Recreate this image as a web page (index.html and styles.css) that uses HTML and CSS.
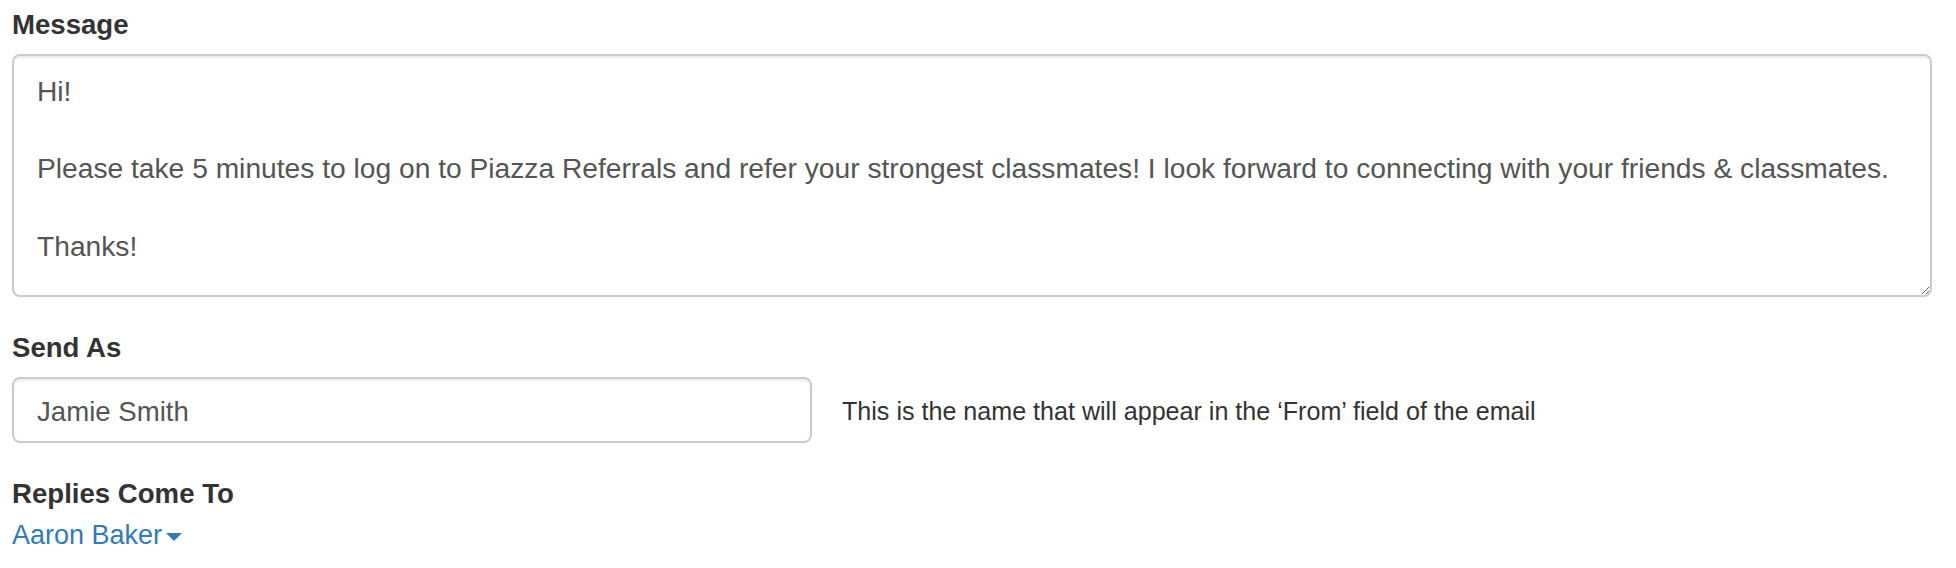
FILE: index.html
```html
<!DOCTYPE html>
<html lang="en">
<head>
<meta charset="utf-8">
<title>Referral message</title>
<link rel="stylesheet" href="styles.css">
</head>
<body>
<form class="form">
  <div class="form-group">
    <label class="label" for="message">Message</label>
    <textarea id="message" class="textarea">Hi!

Please take 5 minutes to log on to Piazza Referrals and refer your strongest classmates! I look forward to connecting with your friends &amp; classmates.

Thanks!</textarea>
  </div>
  <div class="form-group">
    <label class="label" for="sendas">Send As</label>
    <div class="row">
      <input id="sendas" class="input" type="text" value="Jamie Smith">
      <span class="help">This is the name that will appear in the ‘From’ field of the email</span>
    </div>
  </div>
  <div class="form-group">
    <div class="label label-tight">Replies Come To</div>
    <a class="dropdown" href="#">Aaron Baker<span class="caret"></span></a>
  </div>
</form>
</body>
</html>
```

FILE: styles.css
```css
html, body {
  margin: 0;
  padding: 0;
  background: #fff;
}
body {
  font-family: "Liberation Sans", Arial, Helvetica, sans-serif;
  font-size: 27px;
  line-height: 38.8px;
  color: #333;
}
.form {
  padding: 6px 24px 0 12px;
}
.form-group {
  margin-bottom: 32px;
}
.label {
  display: block;
  font-weight: bold;
  font-size: 27.6px;
  color: #333;
  margin-bottom: 9px;
}
.label-tight {
  margin-bottom: 0;
}
.textarea {
  display: block;
  box-sizing: border-box;
  width: 1920px;
  height: 243px;
  margin: 0;
  padding: 16px 23px 8px;
  font-family: inherit;
  font-size: 28.2px;
  line-height: 38.8px;
  color: #555;
  background: #fff;
  border: 2px solid #ccc;
  border-radius: 8px;
  box-shadow: inset 0 2px 2px rgba(0, 0, 0, 0.075);
  outline: none;
  resize: vertical;
}
.row {
  display: flex;
  align-items: center;
  gap: 30px;
}
.input {
  box-sizing: border-box;
  width: 800px;
  height: 66px;
  margin: 0;
  padding: 4px 23px 0;
  font-family: inherit;
  font-size: 27.6px;
  color: #555;
  background: #fff;
  border: 2px solid #ccc;
  border-radius: 8px;
  box-shadow: inset 0 2px 2px rgba(0, 0, 0, 0.075);
  outline: none;
}
.help {
  padding-top: 4px;
  font-size: 25.1px;
  color: #333;
}
.form-group-last {
  margin-bottom: 0;
}
.dropdown {
  display: inline-block;
  margin-top: 3px;
  color: #337ab7;
  text-decoration: none;
}
.caret {
  display: inline-block;
  width: 0;
  height: 0;
  margin-left: 4px;
  vertical-align: middle;
  border-top: 8px solid #337ab7;
  border-left: 8px solid transparent;
  border-right: 8px solid transparent;
}
```
